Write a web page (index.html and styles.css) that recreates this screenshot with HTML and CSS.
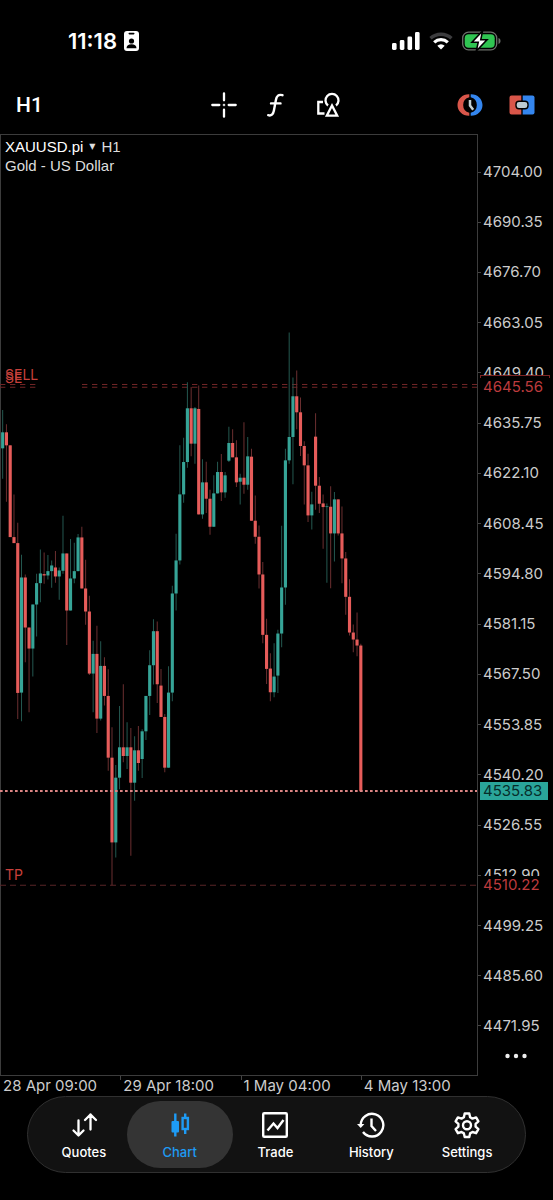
FILE: index.html
```html
<!DOCTYPE html>
<html lang="en">
<head>
<meta charset="utf-8">
<meta name="viewport" content="width=device-width, initial-scale=1">
<title>XAUUSD.pi H1</title>
<link rel="stylesheet" href="styles.css">
</head>
<body>
<div class="app">
  <header class="status">
    <div class="status-left">
      <span class="time">11:18</span>
      <svg width="15" height="20" viewBox="0 0 15 20" aria-hidden="true">
        <rect width="15" height="20" rx="3" fill="#fff"/>
        <rect x="4.5" y="1.8" width="6" height="1.6" rx=".8" fill="#000"/>
        <circle cx="7.5" cy="10" r="2.6" fill="#000"/>
        <path d="M2.5 17.2c0-2.800 2-4 5-4s5 1.200 5 4z" fill="#000"/>
      </svg>
    </div>
    <div class="status-right">
      <svg width="28" height="18" viewBox="0 0 28 18" fill="#fff" aria-hidden="true">
        <rect x="0" y="11" width="4.600" height="7" rx="1.400"/><rect x="7.800" y="8" width="4.600" height="10" rx="1.400"/><rect x="15.500" y="4.500" width="4.600" height="13.500" rx="1.400"/><rect x="23" y="0" width="4.600" height="18" rx="1.400"/>
      </svg>
      <svg width="24" height="18" viewBox="0 0 24 18" fill="none" aria-hidden="true">
        <path d="M1.500 6.300a15.500 15.500 0 0 1 21 0" stroke="#3c3c3e" stroke-width="3.400"/>
        <path d="M5.200 10.300a10 10 0 0 1 13.600 0" stroke="#fff" stroke-width="3.200"/>
        <path d="M12 17.500l-3.700-3.700a5.300 5.300 0 0 1 7.400 0z" fill="#fff"/>
      </svg>
      <svg width="39" height="20" viewBox="0 0 39 20" aria-hidden="true">
        <rect x=".7" y="1.200" width="34" height="17.600" rx="5.800" fill="none" stroke="#6c716b" stroke-width="1.300"/>
        <path d="M36.500 7v6c1.300-.4 2-1.600 2-3s-.7-2.600-2-3z" fill="#6c716b"/>
        <rect x="2.700" y="3.200" width="30" height="13.600" rx="4" fill="#30c552"/>
        <path d="M20.500 0L10 11.300h6.200L14.300 20 25 8.700h-6.200z" fill="#fff" stroke="#000" stroke-width="1.600"/>
      </svg>
    </div>
  </header>

  <div class="toolbar">
    <button class="timeframe" type="button">H1</button>
    <div class="tools">
      <button type="button" aria-label="Crosshair">
        <svg width="26" height="26" viewBox="0 0 26 26" stroke="#fff" stroke-width="2.300" stroke-linecap="round"><path d="M13 1.300v7M13 17.700v7M1.300 13h7M17.700 13h7"/><circle cx="13" cy="13" r=".4" stroke-width="1.800"/></svg>
      </button>
      <button type="button" aria-label="Indicators">
        <svg width="26" height="26" viewBox="0 0 26 26" fill="none" stroke="#fff" stroke-width="2.400" stroke-linecap="round" stroke-linejoin="round"><path d="M19.500 3.200c-4-1.200-5.800.6-6.600 4.800l-2 10.500c-.7 4-2.600 5.600-5.700 4.700M8 11.400h9.500"/></svg>
      </button>
      <button type="button" aria-label="Objects">
        <svg width="26" height="26" viewBox="0 0 26 26" fill="none" stroke="#fff" stroke-width="2.300"><path d="M13 13.500a6.500 6.500 0 1 1 8 0"/><path d="M17 13.500l-5.200 10.200h10.400z"/><path d="M8 10H3.300v11.500H9.500"/></svg>
      </button>
    </div>
    <div class="trade-tools">
      <button type="button" aria-label="Market hours">
        <svg width="26" height="22" viewBox="0 0 26 22" fill="none"><path d="M12.300.2C5.500 0 .5 5 .5 11s5 11 11.800 10.800v-3.100A7.900 7.900 0 0 1 12.300 3.300z" fill="#d9564a"/><path d="M13.700.2C20.500 0 25.500 5 25.500 11s-5 11-11.800 10.800v-3.100a7.900 7.900 0 0 0 0-15.400z" fill="#3486ef"/><path d="M13 6v5.500l3.200 4.200" stroke="#c3cfd3" stroke-width="2.500"/></svg>
      </button>
      <button type="button" aria-label="One click trading">
        <svg width="26" height="20" viewBox="0 0 26 20"><path d="M2.500.5h9.800v19H2.500a2 2 0 0 1-2-2v-15a2 2 0 0 1 2-2z" fill="#d9564a"/><path d="M13.700.5h9.800a2 2 0 0 1 2 2v15a2 2 0 0 1-2 2h-9.800z" fill="#3486ef"/><rect x="7" y="6.300" width="12" height="7.400" rx="3" fill="#bccbd3" stroke="#000" stroke-width="1.400"/></svg>
      </button>
    </div>
  </div>

  <main class="chart">
    <section class="plot" aria-label="XAUUSD.pi candlestick chart">
      <svg class="candles" id="candles" viewBox="0 0 1431 2823" preserveAspectRatio="none" aria-hidden="true"></svg>
      <div class="legend">
        <button class="symbol" type="button"><span class="symbol-name">XAUUSD.pi</span><span class="caret">▼</span><span>H1</span></button>
        <div>Gold - US Dollar</div>
      </div>
      <span class="tag tag-sell">SELL</span>
      <span class="tag tag-sell-2">SE</span>
      <span class="tag tag-tp">TP</span>
    </section>
    <aside class="axis">
      <ul class="prices">
        <li>4704.00</li><li>4690.35</li><li>4676.70</li><li>4663.05</li><li>4649.40</li><li>4635.75</li>
        <li>4622.10</li><li>4608.45</li><li>4594.80</li><li>4581.15</li><li>4567.50</li><li>4553.85</li>
        <li>4540.20</li><li>4526.55</li><li>4512.90</li><li>4499.25</li><li>4485.60</li><li>4471.95</li>
      </ul>
      <button class="more" type="button" aria-label="More">
        <svg width="22" height="6" viewBox="0 0 22 6" fill="#eee"><circle cx="2.500" cy="3" r="2.200"/><circle cx="11" cy="3" r="2.200"/><circle cx="19.500" cy="3" r="2.200"/></svg>
      </button>
      <span class="level level-sell">4645.56</span>
      <span class="level level-now">4535.83</span>
      <span class="level level-tp">4510.22</span>
    </aside>
  </main>
  <div class="dates"><span>28 Apr 09:00</span><span>29 Apr 18:00</span><span>1 May 04:00</span><span>4 May 13:00</span></div>

  <nav class="tabs">
    <a class="tab" href="#quotes">
      <svg width="28" height="28" viewBox="0 0 28 28" fill="none" stroke="#fff" stroke-width="2.300" stroke-linecap="round" stroke-linejoin="round"><path d="M8.500 9.500V24M3.500 19.500l5 5 5-5M20.500 18.500V3.500M15 9l5.500-5.500L26 9"/></svg>
      <span>Quotes</span>
    </a>
    <a class="tab active" href="#chart" aria-current="page">
      <svg width="28" height="28" viewBox="0 0 28 28" fill="none" stroke="#1e9bf5" stroke-width="2.400"><path d="M9.300 2.500v23"/><rect x="5.500" y="10" width="7.500" height="11.500" rx="1" fill="#1e9bf5" stroke="none"/><path d="M19.200 2.500V7M19.200 18V23"/><rect x="16.600" y="7" width="5.300" height="11"/></svg>
      <span>Chart</span>
    </a>
    <a class="tab" href="#trade">
      <svg width="28" height="28" viewBox="0 0 28 28" fill="none" stroke="#fff" stroke-width="2.400"><rect x="2.200" y="2.200" width="23.600" height="23.600" rx="1"/><path d="M6.500 19.500l6-7 4 4.500 6-8"/></svg>
      <span>Trade</span>
    </a>
    <a class="tab" href="#history">
      <svg width="28" height="28" viewBox="0 0 28 28" fill="none" stroke="#fff" stroke-width="2.400"><path d="M3.700 14A11.300 11.300 0 1 1 6 21M6 21a11.300 11.300 0 0 0 5 3.700"/><path d="M0 13h7.400l-3.700 4z" fill="#fff" stroke="none"/><path d="M14.500 7.500V15l4.500 5"/></svg>
      <span>History</span>
    </a>
    <a class="tab" href="#settings">
      <svg width="28" height="28" viewBox="0 0 28 28" fill="none" stroke="#fff" stroke-width="2.400" stroke-linejoin="round"><path d="M11.700 2.500h4.600l.8 3.700 2.400 1.400 3.600-1.200 2.300 4-2.800 2.500v2.800l2.800 2.500-2.300 4-3.600-1.200-2.400 1.400-.8 3.600h-4.600l-.8-3.600-2.400-1.400-3.600 1.200-2.300-4 2.800-2.500v-2.800l-2.800-2.500 2.300-4 3.600 1.200 2.400-1.400z"/><circle cx="14" cy="14.300" r="4"/></svg>
      <span>Settings</span>
    </a>
  </nav>
</div>
<script src="chart.js"></script>
</body>
</html>
```
FILE: styles.css
```css
* { box-sizing: border-box; }
body { margin: 0; background: #000; color: #fff; font-family: Inter, Roboto, sans-serif; }
button { margin: 0; padding: 0; border: 0; background: none; color: inherit; font: inherit; }
svg { display: block; flex: none; }

.app { display: flex; flex-direction: column; min-height: 100vh; overflow: hidden; }

.status { display: flex; justify-content: space-between; align-items: center; height: 82px; padding: 0 52px 0 68px; }
.status-left { display: flex; align-items: center; gap: 7px; }
.status-right { display: flex; align-items: center; gap: 9px; }
.time { font-size: 22px; font-weight: 600; line-height: 24px; }

.toolbar { display: grid; grid-template-columns: 1fr auto 1fr; align-items: center; height: 46px; margin-bottom: 6px; padding: 0 18px 0 16px; }
.timeframe { justify-self: start; font-family: Roboto, sans-serif; font-size: 21px; font-weight: 500; line-height: 24px; }
.tools { display: flex; gap: 26px; }
.trade-tools { display: flex; align-items: center; justify-self: end; gap: 26px; }

.chart { flex: 1; display: grid; grid-template-columns: minmax(0, 1fr) 75px; }
.plot { position: relative; border: 1px solid #3c3c3c; }
.candles { position: absolute; inset: -1px; width: calc(100% + 1px); height: calc(100% + 2px); }
.legend { position: relative; padding: 2px 4px; color: #ddd; font: 15px/19px "Liberation Sans", Arial, sans-serif; }
.symbol { display: flex; align-items: center; gap: 6px; }
.symbol-name { color: #fff; }
.caret { font: 8px/19px "DejaVu Sans", sans-serif; }
.tag { position: absolute; left: 4px; color: #c8403b; font-size: 14px; line-height: 18px; }
.tag-sell { top: 24.6%; }
.tag-sell-2 { top: 24.9%; }
.tag-tp { top: 77.8%; }

.axis { position: relative; display: flex; flex-direction: column; font-size: 15px; line-height: 18px; color: #ccc; }
.prices { flex: 1; display: flex; flex-direction: column; justify-content: space-between; margin: 0; padding: 29px 0 0; list-style: none; }
.prices li { display: flex; align-items: center; gap: 2px; }
.prices li::before { content: ""; width: 3px; height: 1px; background: #444; }
.more { display: flex; align-items: center; justify-content: center; height: 41px; }
.level { position: absolute; left: 2px; padding: 0 3px; background: #000; color: #bd3b3d; }
.level-sell { top: 25.6%; right: 3px; padding: 2px 2px 0; border: 1px solid; border-bottom: 0; border-image: linear-gradient(#7c2526 3px, #000 3px) 1; }
.level-now { top: 68.8%; right: 5px; background: #2aa59a; color: #062d2a; }
.level-tp { top: 78.8%; }

.dates { display: grid; grid-template-columns: repeat(4, 1fr); width: 87%; height: 20px; color: #ccc; font-size: 15px; line-height: 20px; white-space: nowrap; }
.dates span { position: relative; padding-left: 3px; }
.dates span + span::before { content: ""; position: absolute; left: 0; top: 0; width: 1px; height: 4px; background: #444; }

.tabs { display: flex; margin: 0 27px 27px; padding: 4px 10px 4px 8px; border: 1px solid #303030; border-radius: 39px; background: #121212; }
.tab { flex: 1 1 0; display: flex; flex-direction: column; align-items: center; gap: 4px; height: 67px; padding-top: 10px; color: #fff; font-size: 13px; font-weight: 500; line-height: 18px; text-decoration: none; }
.tab.active { position: relative; z-index: 0; color: #1e9bf5; }
.tab.active::before { content: ""; position: absolute; z-index: -1; inset: 0 -5px; border-radius: 34px; background: #343434; }
```
FILE: chart.js
```js
// Each candle: [direction, high, body top, body bottom, low], in chart units.
const candles = [
  [1,149,216,264,355],[0,192,216,255,424],[0,255,255,530,530],[0,402,530,548,548],[0,487,548,997,1075],
  [1,583,651,996,1082],[0,642,651,801,905],[0,801,801,864,1055],[1,732,732,864,948],[1,640,668,732,828],
  [1,567,639,668,725],[0,576,641,645,670],[1,584,632,645,657],[1,600,615,632,682],[0,572,621,648,667],
  [1,621,630,648,718],[1,466,579,631,640],[0,579,579,750,853],[1,536,654,750,750],[1,547,632,654,668],
  [1,521,531,632,632],[0,499,531,684,684],[0,598,684,753,793],[0,706,753,939,943],[1,841,880,939,1055],
  [0,796,880,1074,1117],[1,842,916,1074,1080],[0,890,916,1006,1035],[0,926,1006,1191,1230],[0,1100,1191,1445,1573],
  [1,1213,1251,1445,1490],[1,1036,1160,1251,1286],[0,971,1160,1186,1205],[1,1085,1160,1186,1225],[0,1102,1160,1266,1485],
  [1,1127,1169,1266,1320],[0,1096,1169,1207,1230],[1,1106,1112,1195,1252],[1,1006,1006,1112,1138],[1,869,914,1006,1063],
  [1,776,812,914,972],[0,783,812,971,1027],[0,925,975,1069,1069],[0,1060,1069,1221,1235],[1,917,996,1221,1221],
  [1,676,699,996,1022],[1,520,600,699,750],[1,255,402,600,612],[1,232,305,402,427],[1,66,144,305,322],
  [0,80,144,250,288],[1,140,144,250,310],[0,76,146,462,462],[1,297,366,462,475],[0,304,366,415,458],
  [0,388,415,499,523],[1,345,399,499,499],[1,304,335,399,399],[0,281,335,396,422],[1,335,345,396,412],
  [1,199,248,301,305],[0,207,248,291,291],[0,240,291,366,380],[1,340,352,364,432],[0,186,352,373,400],
  [1,230,288,373,388],[0,265,289,481,481],[0,405,481,529,550],[0,495,529,642,684],[0,605,642,823,848],
  [0,775,823,925,970],[0,878,924,995,1022],[1,848,948,995,1010],[1,808,819,945,997],[1,496,681,819,860],
  [1,265,300,681,733],[1,-83,230,300,310],[1,52,108,230,372],[0,31,108,156,207],[0,112,156,257,287],
  [0,243,257,315,432],[0,280,315,465,485],[1,394,432,465,507],[0,159,229,376,448],[0,350,376,430,458],
  [0,402,429,440,565],[1,429,438,440,667],[0,378,439,519,683],[1,395,417,519,603],[0,417,417,519,525],
  [0,438,519,594,668],[0,575,594,709,763],[0,656,709,816,825],[0,792,816,837,875],[0,756,837,855,887],
  [0,850,855,1292,1292]
];
const colors = [["#e65c5a", "#6b2f30"], ["#36a497", "#245850"]];
const step = 11.31;
const first = 8;
const offset = 678;

const hline = (x1, x2, y, stroke, width, dash) =>
  `<path d="M${x1} ${y}H${x2}" stroke="${stroke}" stroke-width="${width}" stroke-dasharray="${dash}"/>`;

let out = "";
for (const y of [751, 759]) {
  out += hline(0, 108, y, "#702526", 3, "16 14");
  out += hline(246, 1431, y, "#702526", 3, "16 14");
}
out += hline(0, 1431, 2251, "#5a2527", 3, "18 12");
candles.forEach(([up, high, top, bottom, low], i) => {
  const x = first + i * step;
  const [body, wick] = colors[up];
  out += `<path d="M${x} ${high + offset}V${low + offset}" stroke="${wick}" stroke-width="3"/>`;
  out += `<rect x="${x - 4.7}" y="${top + offset}" width="9.4" height="${bottom - top}" fill="${body}"/>`;
});
out += hline(0, 1431, 1969, "#dc8584", 6, "8 7");
document.getElementById("candles").innerHTML = out;
```
